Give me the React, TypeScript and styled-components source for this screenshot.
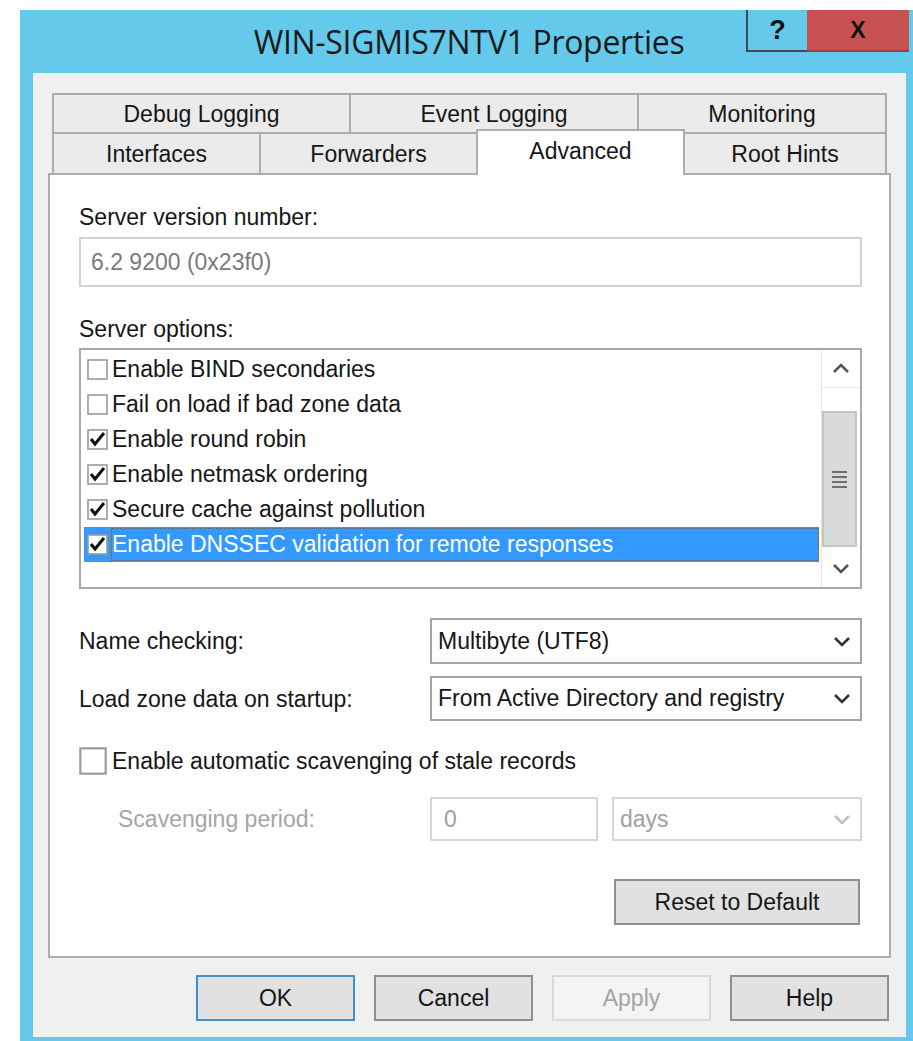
import styled, { createGlobalStyle } from "styled-components";

const GlobalStyle = createGlobalStyle`
  html, body {
    margin: 0;
    padding: 0;
    background: #ffffff;
  }
  body {
    font-family: "Liberation Sans", Arial, sans-serif;
  }
  * {
    box-sizing: border-box;
  }
`;

const Page = styled.div`
  padding: 10px 0 0 20px;
`;

const Window = styled.div`
  width: 893px;
  height: 1031px;
  background: #64c9ea;
  display: flex;
  flex-direction: column;
`;

const TitleBar = styled.div`
  height: 63px;
  flex-shrink: 0;
  display: flex;
`;

const Title = styled.div`
  flex: 1;
  padding-left: 172px;
  text-align: center;
  font-family: "Open Sans", "Noto Sans", sans-serif;
  font-size: 32px;
  letter-spacing: -0.3px;
  line-height: 63px;
  color: #1b1b1b;
  white-space: nowrap;
`;

const CaptionButtons = styled.div`
  display: flex;
  height: 42px;
  margin-right: 4px;
`;

const CaptionButton = styled.div<{ $close?: boolean }>`
  width: ${(p) => (p.$close ? 102 : 61)}px;
  height: 42px;
  display: flex;
  align-items: center;
  justify-content: center;
  background: ${(p) => (p.$close ? "#c75050" : "#64c9ea")};
  border-left: ${(p) => (p.$close ? "none" : "2px solid #3d4a50")};
  border-bottom: 2px solid ${(p) => (p.$close ? "#9e3f3f" : "#3d4a50")};
  font-weight: bold;
  font-size: ${(p) => (p.$close ? 23 : 27)}px;
  color: #111;
`;

const Client = styled.div`
  flex: 1;
  margin: 0 7px 4px 13px;
  background: #f0f0f0;
  padding: 20px 15px 0;
  display: flex;
  flex-direction: column;
`;

const TabStrip = styled.div`
  margin: 0 4px;
  display: flex;
  flex-direction: column;
`;

const TabRow = styled.div`
  display: flex;
  align-items: flex-start;
`;

const Tab = styled.div<{ $width: number; $height: number; $selected?: boolean }>`
  position: relative;
  z-index: ${(p) => (p.$selected ? 1 : 0)};
  flex: 0 0 ${(p) => p.$width}px;
  height: ${(p) => (p.$selected ? p.$height + 5 : p.$height)}px;
  margin-top: ${(p) => (p.$selected ? -3 : 0)}px;
  margin-bottom: ${(p) => (p.$selected ? -2 : 0)}px;
  padding-bottom: ${(p) => (p.$selected ? 5 : 0)}px;
  background: ${(p) => (p.$selected ? "#ffffff" : "#ebebeb")};
  border: 2px solid #acacac;
  border-bottom: none;
  display: flex;
  align-items: center;
  justify-content: center;
  font-size: 23px;
  line-height: 28px;
  color: #161616;

  & + & {
    margin-left: -2px;
  }
`;

const Panel = styled.div`
  height: 785px;
  background: #ffffff;
  border: 2px solid #acacac;
  padding: 0 27px 0 29px;
  display: flex;
  flex-direction: column;
`;

const FieldLabel = styled.div<{ $top: number }>`
  margin-top: ${(p) => p.$top}px;
  font-size: 23px;
  line-height: 28px;
  color: #161616;
`;

const ReadOnlyBox = styled.div`
  margin-top: 6px;
  height: 50px;
  border: 2px solid #d2d2d2;
  background: #ffffff;
  padding-left: 10px;
  display: flex;
  align-items: center;
  font-size: 23px;
  color: #7a7a7a;
`;

const ListBox = styled.div`
  margin-top: 5px;
  height: 241px;
  border: 2px solid #a9a9a9;
  background: #ffffff;
  display: flex;
`;

const ListRows = styled.div`
  flex: 1;
  padding: 2px 2px 0 3px;
`;

const ListRow = styled.div<{ $selected?: boolean }>`
  height: 35px;
  display: flex;
  align-items: center;
  gap: 3px;
  padding-left: 3px;
  background: ${(p) => (p.$selected ? "#3399ff" : "transparent")};
  color: ${(p) => (p.$selected ? "#ffffff" : "#161616")};
  font-size: 23px;
  line-height: 35px;
  white-space: nowrap;
`;

const RowText = styled.span<{ $focused?: boolean }>`
  flex: 1;
  height: 33px;
  line-height: 31px;
  border: 1px dotted ${(p) => (p.$focused ? "#7a5c3a" : "transparent")};
`;

const Scrollbar = styled.div`
  width: 39px;
  border-left: 1px solid #e6e6e6;
  display: flex;
  flex-direction: column;
`;

const ScrollArrow = styled.div`
  height: 37px;
  display: flex;
  align-items: center;
  justify-content: center;
  background: #ffffff;
`;

const ScrollTrack = styled.div`
  flex: 1;
  padding: 23px 3px 3px 0;
  display: flex;
  border-top: 1px solid #e6e6e6;
`;

const ScrollThumb = styled.div`
  flex: 1;
  background: #dadada;
  border: 2px solid #c4c4c4;
  display: flex;
  flex-direction: column;
  align-items: center;
  justify-content: center;
  gap: 3px;
`;

const GripLine = styled.div`
  width: 15px;
  height: 2px;
  background: #6e6e6e;
`;

const FieldRow = styled.div<{ $top: number }>`
  margin-top: ${(p) => p.$top}px;
  display: grid;
  grid-template-columns: 351px 1fr;
  align-items: center;
`;

const RowLabel = styled.div<{ $disabled?: boolean }>`
  font-size: 23px;
  line-height: 28px;
  padding-left: ${(p) => (p.$disabled ? 39 : 0)}px;
  color: ${(p) => (p.$disabled ? "#a5a5a5" : "#161616")};
`;

const Combo = styled.div<{ $disabled?: boolean; $height?: number; $grow?: boolean }>`
  flex: ${(p) => (p.$grow ? 1 : "none")};
  height: ${(p) => p.$height ?? 46}px;
  border: 2px solid ${(p) => (p.$disabled ? "#d6d6d6" : "#a3a3a3")};
  background: #ffffff;
  display: flex;
  align-items: center;
  justify-content: space-between;
  padding: 0 9px 0 6px;
  font-size: 23px;
  color: ${(p) => (p.$disabled ? "#a0a0a0" : "#161616")};
  white-space: nowrap;
`;

const CheckRow = styled.label`
  margin-top: 26px;
  display: flex;
  align-items: center;
  gap: 5px;
  font-size: 23px;
  line-height: 28px;
  color: #161616;
`;

const ScavengeControls = styled.div`
  display: flex;
  gap: 14px;
`;

const NumberBox = styled.div`
  width: 168px;
  height: 44px;
  border: 2px solid #d6d6d6;
  background: #ffffff;
  padding-left: 12px;
  display: flex;
  align-items: center;
  font-size: 23px;
  color: #a0a0a0;
`;

const ButtonRow = styled.div<{ $top: number; $right: number; $gap?: number }>`
  margin-top: ${(p) => p.$top}px;
  margin-right: ${(p) => p.$right}px;
  display: flex;
  justify-content: flex-end;
  gap: ${(p) => p.$gap ?? 0}px;
`;

const Button = styled.button<{ $width: number; $variant?: "default" | "disabled" }>`
  width: ${(p) => p.$width}px;
  height: 46px;
  padding: 0;
  font-family: inherit;
  font-size: 23px;
  background: ${(p) => (p.$variant === "disabled" ? "#f4f4f4" : "#e1e1e1")};
  color: ${(p) => (p.$variant === "disabled" ? "#a3a3a3" : "#161616")};
  border: 2px solid
    ${(p) =>
      p.$variant === "default"
        ? "#3c8fd0"
        : p.$variant === "disabled"
        ? "#d9d9d9"
        : "#8f8f8f"};
`;

const Chevron = ({ up, color = "#333" }: { up?: boolean; color?: string }) => (
  <svg width="18" height="11" viewBox="0 0 18 11">
    <polyline
      points={up ? "2,9 9,2 16,9" : "2,2 9,9 16,2"}
      fill="none"
      stroke={color}
      strokeWidth="2.6"
    />
  </svg>
);

const CheckBox = ({ checked, size }: { checked?: boolean; size: number }) => (
  <svg width={size} height={size} viewBox="0 0 21 21" style={{ flexShrink: 0 }}>
    <rect x="1" y="1" width="19" height="19" fill="#fff" stroke="#9a9a9a" strokeWidth="1.6" />
    {checked && (
      <polyline points="4,10 8,15 17,4" fill="none" stroke="#111" strokeWidth="3" />
    )}
  </svg>
);

const serverOptions = [
  { label: "Enable BIND secondaries", checked: false },
  { label: "Fail on load if bad zone data", checked: false },
  { label: "Enable round robin", checked: true },
  { label: "Enable netmask ordering", checked: true },
  { label: "Secure cache against pollution", checked: true },
  { label: "Enable DNSSEC validation for remote responses", checked: true },
];

export default function App() {
  return (
    <>
      <GlobalStyle />
      <Page>
        <Window>
          <TitleBar>
            <Title>WIN-SIGMIS7NTV1 Properties</Title>
            <CaptionButtons>
              <CaptionButton>?</CaptionButton>
              <CaptionButton $close>X</CaptionButton>
            </CaptionButtons>
          </TitleBar>

          <Client>
            <TabStrip>
              <TabRow>
                <Tab $width={299} $height={39}>Debug Logging</Tab>
                <Tab $width={290} $height={39}>Event Logging</Tab>
                <Tab $width={250} $height={39}>Monitoring</Tab>
              </TabRow>
              <TabRow>
                <Tab $width={209} $height={41}>Interfaces</Tab>
                <Tab $width={219} $height={41}>Forwarders</Tab>
                <Tab $width={209} $height={41} $selected>
                  Advanced
                </Tab>
                <Tab $width={204} $height={41}>Root Hints</Tab>
              </TabRow>
            </TabStrip>

            <Panel>
              <FieldLabel $top={28}>Server version number:</FieldLabel>
              <ReadOnlyBox>6.2 9200 (0x23f0)</ReadOnlyBox>

              <FieldLabel $top={28}>Server options:</FieldLabel>
              <ListBox>
                <ListRows>
                  {serverOptions.map((opt, i) => {
                    const selected = i === serverOptions.length - 1;
                    return (
                      <ListRow key={opt.label} $selected={selected}>
                        <CheckBox checked={opt.checked} size={21} />
                        <RowText $focused={selected}>{opt.label}</RowText>
                      </ListRow>
                    );
                  })}
                </ListRows>
                <Scrollbar>
                  <ScrollArrow>
                    <Chevron up color="#555" />
                  </ScrollArrow>
                  <ScrollTrack>
                    <ScrollThumb>
                      <GripLine />
                      <GripLine />
                      <GripLine />
                      <GripLine />
                    </ScrollThumb>
                  </ScrollTrack>
                  <ScrollArrow>
                    <Chevron color="#555" />
                  </ScrollArrow>
                </Scrollbar>
              </ListBox>

              <FieldRow $top={29}>
                <RowLabel>Name checking:</RowLabel>
                <Combo>
                  Multibyte (UTF8)
                  <Chevron />
                </Combo>
              </FieldRow>
              <FieldRow $top={12}>
                <RowLabel>Load zone data on startup:</RowLabel>
                <Combo $height={45}>
                  From Active Directory and registry
                  <Chevron />
                </Combo>
              </FieldRow>

              <CheckRow>
                <CheckBox size={28} />
                Enable automatic scavenging of stale records
              </CheckRow>

              <FieldRow $top={22}>
                <RowLabel $disabled>Scavenging period:</RowLabel>
                <ScavengeControls>
                  <NumberBox>0</NumberBox>
                  <Combo $disabled $grow $height={44}>
                    days
                    <Chevron color="#c0c0c0" />
                  </Combo>
                </ScavengeControls>
              </FieldRow>

              <ButtonRow $top={38} $right={2}>
                <Button $width={246}>Reset to Default</Button>
              </ButtonRow>
            </Panel>

            <ButtonRow $top={17} $right={2} $gap={19}>
              <Button $width={159} $variant="default">
                OK
              </Button>
              <Button $width={159}>Cancel</Button>
              <Button $width={159} $variant="disabled">
                Apply
              </Button>
              <Button $width={159}>Help</Button>
            </ButtonRow>
          </Client>
        </Window>
      </Page>
    </>
  );
}
